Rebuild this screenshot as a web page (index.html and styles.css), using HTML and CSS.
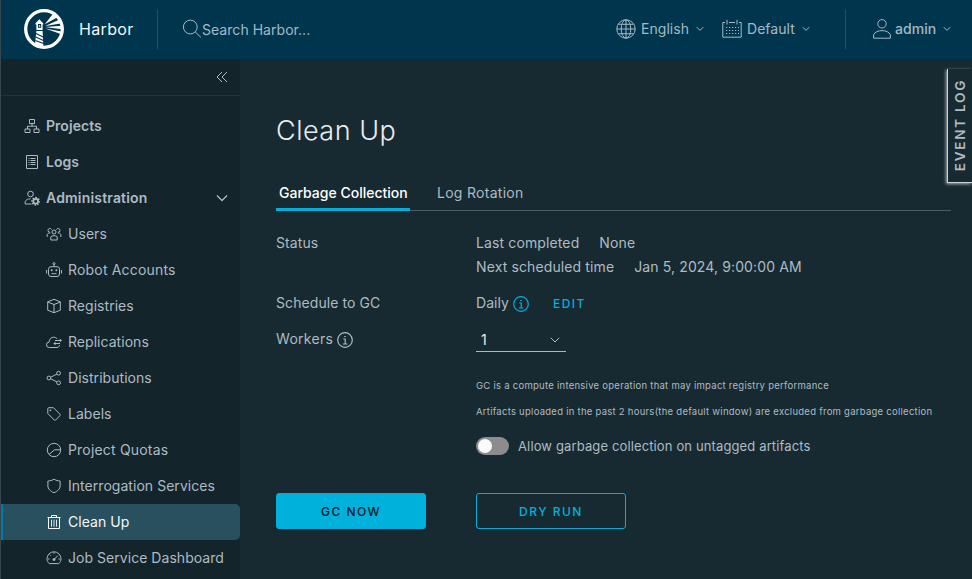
FILE: index.html
```html
<!DOCTYPE html>
<html lang="en">
<head>
<meta charset="utf-8">
<title>Harbor</title>
<link rel="stylesheet" href="styles.css">
</head>
<body>
<header class="header">
  <a class="brand">
    <svg class="logo" viewBox="0 0 40 40">
      <circle cx="20" cy="20" r="18.300" fill="none" stroke="#fff" stroke-width="3.300"/>
      <path fill="#fff" d="M11.500 14.300 15.300 10.300 19.200 14.300V15.500H18.600V21H12.400V15.500H11.500Z"/>
      <path fill="#00364d" d="M14 15h3.200v3.800H14z"/>
      <path fill="#fff" d="M14.900 16.200h1.300v1.600h-1.300zM12.400 22h6.200L19.400 38.500 11 35.500z"/>
      <path stroke="#00364d" stroke-width="1.100" d="M12 24.600 19.200 28M11.800 28 19.400 31.400M11.400 31.400 19.600 34.600"/>
      <path fill="#fff" d="M20.800 15.300 29 4.800 33 8.600ZM21.200 17 34.500 11 36.500 14.600ZM21.200 18.100 37.500 16.800V20.300ZM21.200 19.400 37.500 22.400 36 24.800Z"/>
    </svg>
    <span class="title">Harbor</span>
  </a>
  <label class="search">
    <svg class="i20" viewBox="0 0 20 20"><circle cx="8.300" cy="8" r="6.900"/><path d="m13.300 13 5.600 5.400"/></svg>
    <span>Search Harbor...</span>
  </label>
  <nav class="actions">
    <a class="action lang">
      <svg class="i20" viewBox="0 0 20 20"><circle cx="10" cy="10" r="9.200"/><ellipse cx="10" cy="10" rx="4.800" ry="9.200"/><path d="M10 1v18M1 10h18M2.500 5.300h15M2.500 14.700h15"/></svg>
      <span>English</span>
      <svg class="caret" viewBox="0 0 8 6"><path d="m.8 1.200 3.200 3.200 3.200-3.200"/></svg>
    </a>
    <a class="action cal">
      <svg class="i20" viewBox="0 0 20 20"><path d="M3 3.500H.8v14.700h18.400V3.500H17M7 3.500h6M5 .8v4.700M15 .8v4.700"/><path stroke-dasharray="1.200 1.800" d="M4 8.500h13M4 11.500h13M4 14.500h13"/></svg>
      <span>Default</span>
      <svg class="caret" viewBox="0 0 8 6"><path d="m.8 1.200 3.200 3.200 3.200-3.200"/></svg>
    </a>
    <a class="action user">
      <svg class="i20" viewBox="0 0 20 20"><circle cx="10" cy="4.800" r="4.200"/><path d="M1.600 19.200v-3.400C3 12.800 6.300 11.600 10 11.600s7 1.200 8.400 4.200v3.400z"/></svg>
      <span>admin</span>
      <svg class="caret" viewBox="0 0 8 6"><path d="m.8 1.200 3.200 3.200 3.200-3.200"/></svg>
    </a>
  </nav>
</header>
<div class="body">
  <aside class="sidebar">
    <div class="collapse"><svg class="i12" viewBox="0 0 12 12"><path d="M6 1 1 6l5 5M11 1 6 6l5 5"/></svg></div>
    <nav class="menu">
      <a class="item top"><svg class="icon" viewBox="0 0 16 16"><path d="M5.500 1.500h5v4h-5zM1 11h5v3.500H1zM10 11h5v3.500h-5zM8 5.500V8M3.500 11V8.200h9V11"/></svg><span>Projects</span></a>
      <a class="item top"><svg class="icon" viewBox="0 0 16 16"><path d="M2.500 1.500h11v13h-11zM4.500 4.500h1M6.500 4.500h5M4.500 6.500h1M6.500 6.500h5M4.500 8.500h1M6.500 8.500h5M4.500 10.500h1M6.500 10.500h5"/></svg><span>Logs</span></a>
      <a class="item top wide"><svg class="icon" viewBox="0 0 16 16"><circle cx="6.500" cy="4" r="2.800"/><path d="M7.500 14H1.200v-2.500C2.200 9.500 4 8.800 6.500 8.800"/><circle cx="11.700" cy="11.300" r="2.400" stroke-width="1.800"/><path stroke-width="1.500" stroke-dasharray="1.400 1.370" d="M11.700 7.600a3.700 3.700 0 1 1 0 7.400 3.700 3.700 0 1 1 0-7.400"/></svg><span>Administration</span><svg class="i12 chev" viewBox="0 0 12 12"><path d="m1 3.500 5 5 5-5"/></svg></a>
      <a class="item"><svg class="icon" viewBox="0 0 16 16"><circle cx="8" cy="6" r="2"/><path d="M4.800 14v-3.200C6 9.300 10 9.300 11.200 10.800V14zM5.600 3.600A1.900 1.900 0 1 0 4 6.300M10.400 3.600A1.900 1.900 0 1 1 12 6.300M1.200 11V8.500c.5-1 1.500-1.600 3-1.600M14.800 11V8.500c-.5-1-1.500-1.600-3-1.600"/></svg><span>Users</span></a>
      <a class="item wide"><svg class="icon" viewBox="0 0 16 16"><rect x="2.500" y="4.700" width="11" height="9.800" rx="2.500"/><path d="M8 4.700V2.500M.6 8v3.500M15.400 8v3.500M5.500 11.700h5"/><circle cx="8" cy="1.600" r="1"/><circle class="dot" cx="5.700" cy="8.300" r="1"/><circle class="dot" cx="10.300" cy="8.300" r="1"/></svg><span>Robot Accounts</span></a>
      <a class="item"><svg class="icon" viewBox="0 0 16 16"><path d="m8 1.300 6.300 2.500v8.400L8 14.700l-6.300-2.500V3.800zM1.700 4 8 6.500 14.300 4M8 6.500v8.200"/></svg><span>Registries</span></a>
      <a class="item"><svg class="icon" viewBox="0 0 16 16"><path d="M13.500 11.200c-.2 1.400-1.200 2.300-2.500 2.300H3.300a2.700 2.700 0 0 1-.2-5.400C3.200 5.200 5.200 3.200 7.700 3.200c1.500 0 2.800.7 3.600 1.800M9 6.500h6.300M13.700 4.900l1.600 1.600-1.600 1.600M14 9.500H8M9.600 7.900 8 9.500l1.600 1.600"/></svg><span>Replications</span></a>
      <a class="item"><svg class="icon" viewBox="0 0 16 16"><circle cx="2.900" cy="8" r="1.900"/><circle cx="12.600" cy="3.200" r="1.900"/><circle cx="12.600" cy="12.800" r="1.900"/><path d="m4.700 7.200 6.200-3.100M4.700 8.800l6.200 3.100"/></svg><span>Distributions</span></a>
      <a class="item"><svg class="icon" viewBox="0 0 16 16"><path d="M1.800 2.700c0-.6.400-1 1-1h4.700l6.500 6.600c.4.400.4.900 0 1.300l-4.400 4.500c-.4.400-.9.400-1.300 0L1.800 7.500z"/><circle class="dot" cx="4.400" cy="4.300" r=".9"/></svg><span>Labels</span></a>
      <a class="item wide"><svg class="icon" viewBox="0 0 16 16"><circle cx="8" cy="8" r="6.700"/><path d="M14.600 7.800H8.500L3 12.500"/></svg><span>Project Quotas</span></a>
      <a class="item"><svg class="icon" viewBox="0 0 16 16"><path d="M8 1.200c2 1.200 4 1.700 6.100 1.800v5c0 3-2.300 5-6.100 6.800C4.200 13 1.900 11 1.900 8V3C4 2.900 6 2.400 8 1.200z"/></svg><span>Interrogation Services</span></a>
      <a class="item active"><svg class="icon" viewBox="0 0 16 16"><path d="M1.500 3.500h13M5.500 3.200V1.500h5v1.700M2.500 3.800v10.700h11V3.800"/><path stroke-width=".9" d="M5.500 5.700v7M8 5.700v7M10.500 5.700v7"/></svg><span>Clean Up</span></a>
      <a class="item"><svg class="icon" viewBox="0 0 16 16"><path d="M3.300 13.600C1.900 12.500 1 10.800 1 8.800a7 7 0 0 1 14 0c0 2-.9 3.700-2.300 4.800zM8 2.500v1.300M2 9h1.500M12.500 9H14M3.800 4.600l1 1M8 9.600l3.800-4"/><circle class="dot" cx="8" cy="9.600" r="1.400"/></svg><span>Job Service Dashboard</span></a>
    </nav>
  </aside>
  <main class="content">
    <h1>Clean Up</h1>
    <div class="tabs"><a class="tab selected"><span>Garbage Collection</span></a><a class="tab logs"><span>Log Rotation</span></a></div>
    <div class="form">
      <div class="row status"><span class="label">Status</span>
        <div class="lines"><div><span class="k">Last completed</span><span class="v">None</span></div><div><span class="k">Next scheduled time</span><span class="v">Jan 5, 2024, 9:00:00 AM</span></div></div>
      </div>
      <div class="row"><span class="label">Schedule to GC</span><span class="daily">Daily</span><svg class="info blue" viewBox="0 0 16 16"><circle cx="8" cy="8" r="7.300"/><path d="M6.300 7h1.900v5M5.800 12h4.600M7.200 4.500h1.600"/></svg><a class="edit">EDIT</a></div>
      <div class="row"><span class="label"><span class="workers">Workers</span><svg class="info" viewBox="0 0 16 16"><circle cx="8" cy="8" r="7.300"/><path d="M6.300 7h1.900v5M5.800 12h4.600M7.200 4.500h1.600"/></svg></span>
        <div class="select"><span>1</span><svg viewBox="0 0 10 6"><path d="m.8.800 4.200 4.200L9.200.800"/></svg></div>
      </div>
      <div class="notes"><p>GC is a compute intensive operation that may impact registry performance</p><p>Artifacts uploaded in the past 2 hours(the default window) are excluded from garbage collection</p></div>
      <div class="toggle"><i></i><span>Allow garbage collection on untagged artifacts</span></div>
      <div class="buttons"><button class="btn primary">GC NOW</button><button class="btn">DRY RUN</button></div>
    </div>
  </main>
</div>
<div class="eventlog"><span>EVENT LOG</span></div>
</body>
</html>
```
FILE: styles.css
```css
* { box-sizing: border-box; }
body { margin: 0; width: 972px; height: 579px; overflow: hidden; background: #182a31; color: #adbbc4; font: 14px/24px Inter, "Liberation Sans", sans-serif; letter-spacing: .04px; display: flex; flex-direction: column; position: relative; border-left: 1px solid #35474f; }
span, a, p { white-space: nowrap; }
svg { fill: none; stroke: currentColor; flex: none; }
.header { height: 59px; padding-bottom: 1px; background: #00364d; display: flex; align-items: center; color: #a2bac4; }
.brand { display: flex; align-items: center; width: 157px; height: 40px; padding-left: 23px; border-right: 1px solid #1e5266; }
.logo { width: 40px; height: 40px; stroke: none; }
.title { margin-left: 15px; color: #f2f6f8; font-size: 16px; letter-spacing: .35px; }
.search { display: flex; align-items: center; padding-left: 24px; }
.search span { padding-top: 2px; }
.i20 { width: 20px; height: 20px; }
.actions { display: flex; align-items: center; margin-left: auto; }
.action { display: flex; align-items: center; }
.action span { margin-left: 5px; }
.caret { width: 8px; height: 6px; margin-left: 7px; }
.lang { width: 106px; }
.cal { width: 123px; }
.user { width: 127px; height: 40px; padding-left: 26px; border-left: 1px solid #1e5266; }
.user span { margin-left: 3px; font-weight: 500; }
.body { flex: 1; display: flex; min-height: 0; }
.sidebar { width: 239px; background: #14242b; display: flex; flex-direction: column; }
.collapse { height: 37px; border-bottom: 1px solid #21333b; display: flex; align-items: center; justify-content: flex-end; padding-right: 12px; }
.i12 { width: 12px; height: 12px; }
.menu { padding-top: 12px; }
.item { height: 36px; display: flex; align-items: center; padding-left: 45px; }
.item.top { padding-left: 23px; font-weight: 600; }
.wide { letter-spacing: .18px; }
.icon { width: 16px; height: 16px; margin-right: 6px; }
.dot { fill: currentColor; stroke: none; }
.chev { margin: 0 12px 0 auto; stroke-width: 1.3; }
.active { background: #29505f; color: #f4f8fa; border-radius: 0 5px 5px 0; box-shadow: inset 2px 0 #0079ad; }
.content { flex: 1; padding: 52px 21px 0 36px; }
h1 { margin: 0; font-weight: 300; font-size: 27px; line-height: 40px; letter-spacing: .5px; color: #e9edf0; }
.tabs { margin-top: 24px; height: 36px; display: flex; border-bottom: 1px solid #4a5b63; }
.tab { height: 36px; line-height: 36px; margin-right: 24px; padding: 0 3px; }
.logs { letter-spacing: .28px; }
.selected { color: #fff; font-weight: 500; letter-spacing: 0; width: 134px; border-bottom: 3px solid #00b1dc; }
.form { padding-top: 14px; }
.row { display: flex; align-items: center; height: 36px; }
.status { height: 60px; align-items: flex-start; padding-top: 6px; }
.label { width: 200px; display: flex; align-items: center; letter-spacing: .08px; }
.lines { letter-spacing: .12px; }
.v { margin-left: 20px; }
.workers { letter-spacing: .3px; }
.info { width: 16px; height: 16px; margin: 1px 0 0 4px; stroke-width: 1.2; }
.blue { color: #00b1dc; }
.edit { color: #00b1dc; font-size: 12px; font-weight: 500; letter-spacing: 1.5px; margin-left: 24px; padding-top: 1px; }
.select { width: 90px; height: 24px; margin-top: 2px; border-bottom: 1px solid #a8bac3; display: flex; align-items: center; justify-content: space-between; padding: 0 6px 0 5px; color: #e9edf0; }
.select svg { width: 10px; height: 6px; color: #adbbc4; }
.notes { padding: 23px 0 16px 200px; font-size: 9.5px; line-height: 12px; letter-spacing: .26px; }
.notes p { margin: 0; }
.notes p + p { margin-top: 14px; }
.toggle { display: flex; align-items: center; padding-left: 200px; height: 24px; }
.toggle i { width: 33px; height: 18px; border-radius: 9px; background: #8c8c8c; padding: 2px; display: flex; }
.toggle i::before { content: ""; width: 14px; height: 14px; border-radius: 7px; background: #fafafa; }
.toggle span { margin-left: 9px; font-size: 13px; letter-spacing: .13px; }
.buttons { display: flex; gap: 50px; padding-top: 35px; }
.btn { width: 150px; height: 36px; border: 1px solid #00b1dc; border-radius: 3px; background: none; color: #00b1dc; font: 500 12px Inter, sans-serif; letter-spacing: 1.5px; padding: 1px 0 0 0; }
.primary { background: #00b1dc; color: #06171f; }
.eventlog { position: absolute; right: 0; top: 69px; width: 25px; height: 114px; display: flex; align-items: center; justify-content: center; border: solid #c9d2d6; border-width: 0 0 1px 1px; box-shadow: -1px 1px 3px #aab4b9; background: #182a31; }
.eventlog span { writing-mode: vertical-rl; transform: rotate(180deg); font-weight: 600; font-size: 13.5px; letter-spacing: 1.75px; }
```
